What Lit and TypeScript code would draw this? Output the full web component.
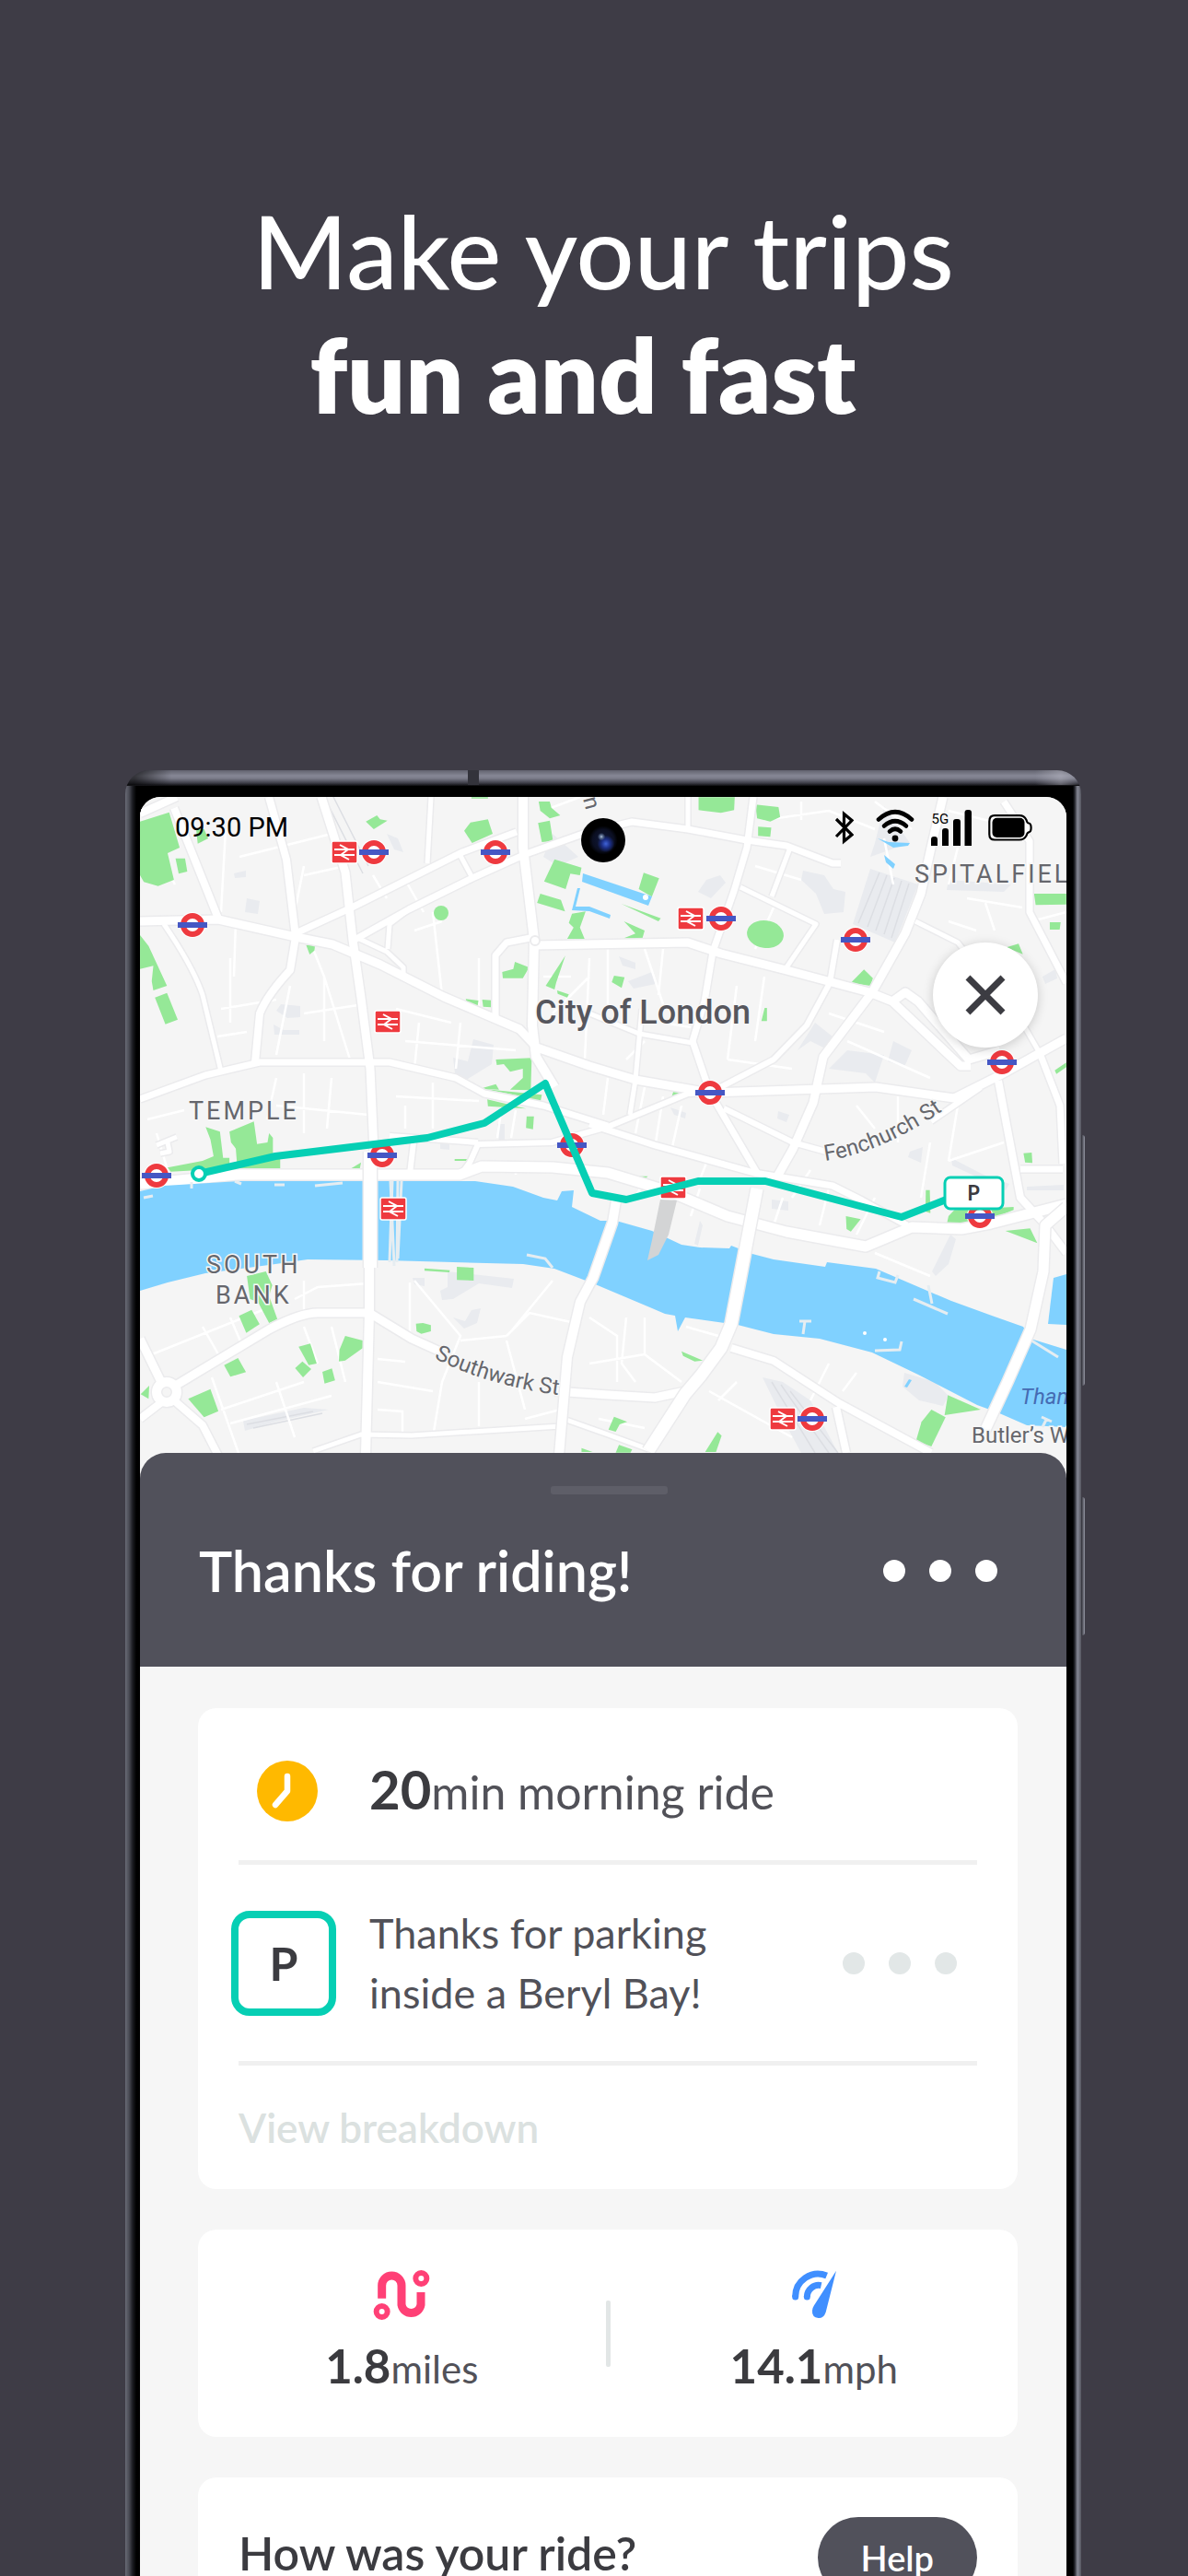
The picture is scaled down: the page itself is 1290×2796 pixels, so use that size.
import { LitElement, html, svg, css } from "lit";
import { customElement } from "lit/decorators.js";

type Road = [string, number];

/* Map geometry, in the coordinates of the map's own view box. */
const ROADS: Road[] = [
  ["M152 1000L237 998L321 1017L361 1025L413 1047L482 1082L564 1117L583 1137L640 1157L690 1172L771 1186L951 1180L1036 1192L1086 1167L1129 1143L1158 1127", 9],
  ["M292 865L311 933L321 1017L315 1053Q290 1080 282 1100L277 1153", 8],
  ["M349 865L375 947L383 1020L392 1083L402 1160L406 1250", 9],
  ["M401 1376V1425L397 1580", 10],
  ["M321 1013L382 985L502 925L561 903", 7],
  ["M385 1020L444 987L513 953L571 927L633 905L686 892L747 900L811 912L854 918L904 937L913 937", 7],
  ["M568 865V920L580 1020L578 1113L582 1147L602 1180", 10],
  ["M581 1017L550 1023L538 1037V1107", 7],
  ["M580 1026L747 1023L783 1035L854 1053L944 1077L969 1087L1043 1157L1054 1157M969 1087L983 1077L997 1087L1052 1150L1086 1140", 9],
  ["M818 865L811 920L797 967L774 1033L765 1087L752 1130L771 1186L822 1273", 7],
  ["M858 920L838 973M804 963L886 1003L854 1050", 5],
  ["M1024 865L1011 920L1000 970L983 1013L947 1077L894 1147L883 1197L861 1247L844 1277", 9],
  ["M909 1020L901 1067L876 1113L840 1150L771 1186", 6],
  ["M994 1000L1040 1023L1110 1110L1129 1143", 5],
  ["M1090 870L1118 913V990L1158 1067", 7],
  ["M1129 1143L1151 1200L1154 1263M1108 1269H1154", 7],
  ["M1084 1173L1108 1300L1133 1327L1158 1360", 8],
  ["M152 1285L258 1275H499L523 1266L600 1267L660 1273L726 1293L790 1320L854 1337L940 1353L990 1332L1044 1334L1076 1328L1158 1307", 11],
  ["M499 1277L510 1262L519 1242L599 1240L660 1223L747 1187L771 1186", 6],
  ["M423 1233L519 1240M449 1240L445 1274", 6],
  ["M640 1220L711 1243L819 1273L904 1287L936 1303L985 1330", 7],
  ["M786 1203L861 1240L897 1250M1011 1217L1065 1180", 6],
  ["M152 1193L223 1167L282 1153H423L495 1170L526 1187L590 1200L660 1222", 7],
  ["M189 877L237 997M152 883L192 865", 8],
  ["M178 1003Q210 1050 220 1080L240 1163", 5],
  ["M468 865L464 937M499 927L513 953M697 1095L690 1172L684 1210", 5],
  ["M388 1018L420 1033L438 1050V1063M444 987L423 1003L421 1030", 5],
  ["M747 865V900M640 1100L694 1122L752 1132", 5],
  ["M152 1453L175 1500M192 1503L292 1443Q326 1425 345 1425H401L447 1453L478 1467M602 1510L660 1514L711 1517L744 1510", 9],
  ["M189 1520L220 1547L237 1580M152 1540L178 1520", 8],
  ["M170 1511a11 11 0 1 0 22 0a11 11 0 1 0 -22 0", 10],
  ["M340 1575L392 1557L447 1558L609 1548M612 1540L660 1557L704 1573", 5],
  ["M794 1463L840 1477L911 1523L1011 1577M908 1527L919 1577", 8],
  ["M170 1243L192 1234M182 1240L184 1250L174 1252", 5],
];

const BRIDGES: Road[] = [
  ["M402 1250V1376", 14],
  ["M669 1303L665 1327L644 1387L630 1413L616 1473L607 1580", 10],
  ["M822 1290L794 1437L783 1463L761 1493L744 1513L704 1575", 13],
  ["M1158 1310L1135 1330L1133 1380L1119 1443L1094 1500L1068 1556", 11],
];

const LANES =
  "M160 905L190 960M245 900L240 990M260 930L360 905M250 1040V1110M256 1000L254 1060M330 940L320 990M330 950L375 940M240 1095L300 1085M236 1125L268 1120M340 1030L352 1060V1130M352 1060L380 1150M330 1100L395 1090M300 1145L315 1070M405 950L420 975M440 955L460 990M450 1010L480 1000M470 990L480 1080M520 1040V1095M430 1095L490 1110M440 1130L560 1140M455 1110L450 1160M500 1110L495 1160M160 1215L200 1205M170 1230L182 1270M300 1170L290 1215M330 1165V1230M360 1170L355 1225M300 1200L400 1210M430 1190L520 1195M440 1200V1225M470 1175V1225M545 1200L540 1235M560 1205L555 1235M560 1275V1262M590 880L630 865M590 1060H620M600 1100L640 1060M640 1040L635 1150M660 1030V1090M700 1030L720 1090M720 1030L715 1080M800 1070L790 1150M830 1060L820 1130M700 1130L680 1150M720 1110L750 1115M660 1170L655 1210M700 1180L690 1230M720 1190L712 1240M740 1200L730 1245M790 1150L860 1160M830 890L900 880M900 880L950 900M870 870V890M950 870L990 900M960 910L970 960M820 940L870 955M840 985L820 1030M1030 880L1110 900M1040 920L1030 960M1050 975L1110 985M1030 1000L1060 1010M1070 980L1080 1010M1120 1000L1158 990M900 1100L960 1120M920 1130L1010 1170M930 1200L950 1225M975 1190V1240M1010 1240L1000 1300M1040 1200L1030 1260M1030 1260L1090 1240M880 1270L860 1300M900 1290L890 1330M700 1280L690 1300M760 1290L750 1320M770 1255L760 1280M850 1300L840 1330M950 1300L930 1340M950 1360L1010 1385M165 1470L290 1420M220 1440L240 1475M250 1430L265 1465M240 1530L330 1500M250 1545L360 1515M330 1440L345 1480M360 1440L375 1500M230 1495L260 1580M300 1500L320 1560M330 1390V1430M400 1393L345 1397L320 1410M445 1392V1450M450 1390L500 1450L480 1500L470 1560M410 1475L440 1478M410 1500L470 1510M410 1530L437 1532V1556M550 1450L500 1455M550 1450L575 1425L620 1435M550 1455L570 1530M555 1445L600 1390M520 1500V1548M570 1540L608 1530M640 1430L670 1450V1500M680 1430L675 1480L690 1500M700 1430V1470L740 1500M745 1440L780 1450M770 1510L860 1560M640 1480L700 1470M800 1500L780 1520M900 1480L880 1520M930 1490L915 1510M650 1540L700 1550";

const BUILDINGS =
  "M945 943L997 960L972 1023L926 1003ZM872 945L895 950L905 965L918 968L916 990L895 992L886 970L870 955ZM767 955L782 950L788 958L772 975L758 968ZM268 975L282 978L280 992L266 990ZM254 948L267 945V952L255 953ZM305 1090L326 1092V1104L312 1105L300 1097ZM297 1112L308 1118H325V1123H298ZM492 1148L508 1152L514 1128L536 1134L534 1155L500 1176L494 1165ZM672 1038L690 1045V1052L676 1048ZM682 1065L708 1055L712 1068L688 1073ZM448 1387H461V1396L450 1394ZM478 1401L486 1397V1380L503 1382L558 1388L556 1398L520 1393L492 1410L480 1411ZM492 1430L505 1434L512 1422L522 1420L518 1436L504 1442ZM264 1542L330 1528L357 1530L300 1543L266 1553ZM828 1495L850 1500L880 1520L910 1577H870L850 1540ZM982 1490L1015 1500L1030 1515L1024 1526L998 1520L980 1505ZM1033 1257L1068 1275L1096 1285L1092 1292L1034 1265ZM1032 1340L1038 1345L1030 1372L1016 1385L1012 1380ZM838 1302L856 1304V1314L838 1312ZM760 1325L763 1330L758 1352L754 1350ZM1030 955L1098 960L1090 968L1028 966ZM1132 1060L1146 1052L1148 1062L1135 1068ZM970 1130L990 1140L982 1158L964 1152ZM900 1160L920 1140L960 1145L950 1175L940 1165ZM866 1140L885 1110L904 1125L900 1140L880 1130ZM960 875L988 915L945 930L950 915ZM1155 1286L1115 1288V1292H1155ZM420 905L432 910L438 925L428 922ZM600 905L628 930L606 940L590 930ZM728 1202L745 1208L744 1214L732 1210ZM845 1206L857 1210L854 1218L844 1214ZM988 1250L1002 1245L1000 1262L986 1256ZM540 1220H548V1240H542ZM478 1238L488 1236V1248L478 1247Z";

const WATER = [
  "M152 1293L178 1287L258 1282H516L557 1288L590 1300L605 1303L610 1293L623 1292L621 1310L652 1325L669 1325L708 1336L740 1351L760 1354L792 1355L794 1352L817 1361L840 1367L896 1375L898 1370L951 1377L1000 1398L1033 1412L1077 1428L1111 1440L1119 1453L1158 1465V1549L1115 1547L1083 1533L1061 1525L997 1492L947 1468L890 1453L840 1448L801 1438L744 1430L736 1445L733 1428L722 1426L708 1420L644 1393L602 1377L568 1372L420 1368L334 1367L292 1373L223 1382L182 1392L152 1401Z",
  "M1144 1387L1158 1383V1438L1138 1437Z",
  "M633 948L708 973L704 983L632 957Z",
  "M630 964L625 984L640 984L663 993L662 997L640 989L621 988L627 964Z",
  "M953 910L965 914L988 915L986 918L970 920ZM960 928L972 938L970 943L962 936ZM982 1505L987 1497L990 1498L985 1506Z",
];

/* Parks, grouped by map quadrant: each group has its own unit grid. */
const PARKS: { grid: string; shapes: string[] }[] = [
  {
    grid: "translate(120 820) scale(.3444 .3333)",
    shapes: [
      "93,215 185,185 218,300 180,318 200,405 150,425 105,412 93,390",
      "205,335 235,335 242,378 215,385",
      "270,240 295,240 308,270 275,287",
      "805,215 840,195 850,208 873,212 830,240",
      "1115,245 1135,218 1190,208 1205,255 1140,285",
      "1350,150 1385,150 1390,170 1418,195 1385,205 1355,180",
      "1348,220 1385,212 1395,278 1360,282",
      "1400,338 1485,365 1480,390 1450,385 1435,435 1367,410",
      "1355,450 1420,470 1433,508 1345,480",
      "1455,515 1498,508 1480,560 1495,598 1440,597 1460,560 1445,545",
      "1434,652 1405,740 1400,762 1372,750",
      "1408,765 1445,778 1440,788 1410,776",
      "1235,705 1270,695 1275,672 1320,690 1300,725 1237,725",
      "1120,793 1160,798 1157,818 1125,810",
      "1172,795 1202,797 1200,820 1175,818",
      "93,585 120,620 178,750 135,765 130,735 135,685 93,695",
      "140,788 178,773 212,860 173,875",
      "617,618 645,615 643,635 628,648",
      "1215,990 1328,985 1325,1090 1260,1088 1300,1050 1300,1020 1260,1030 1240,1005 1218,1008",
      "1165,1085 1215,1070 1225,1088",
      "1138,136 1190,136 1190,140 1138,140",
    ],
  },
  {
    grid: "translate(120 1180) scale(.3444 .3333)",
    shapes: [
      "300,130 345,145 355,230 375,230 375,265 190,275 180,262 290,240 325,225 315,170",
      "375,145 452,112 462,185 495,180 500,150 512,165 512,215 535,235 535,265 400,265 395,200 380,180",
      "750,270 790,245 785,270",
      "1188,40 1310,70 1190,62",
      "1170,5 1360,25 1355,50 1300,30",
      "1312,95 1335,95 1332,137 1310,133",
      "1085,234 1130,234 1130,240 1085,240",
      "430,615 490,600 510,645 500,680 526,755 500,768 465,700 440,690",
      "405,745 445,725 470,772 428,800",
      "358,905 402,882 427,928 378,943",
      "593,845 630,835 650,900 625,905",
      "582,915 605,893 633,918 607,945",
      "668,927 698,916 708,955 675,965",
      "740,810 795,825 795,850 740,890 720,893 722,855",
      "245,1015 315,983 340,1055 295,1075",
      "963,770 985,768 1010,775 1010,795 980,803 965,795",
      "1092,585 1145,588 1145,630 1092,628",
      "990,590 1070,596 1068,603 990,598",
      "95,1000 122,972 120,1015",
      "1485,1175 1520,1188 1485,1188",
    ],
  },
  {
    grid: "translate(640 820) scale(.3571 .3333)",
    shapes: [
      "332,136 442,136 440,178 400,187 332,178",
      "505,160 575,168 580,200 550,215 510,205",
      "513,232 553,235 550,265 513,262",
      "165,382 212,400 190,460 150,435",
      "97,483 217,530 210,540",
      "105,540 168,570 160,600 105,595 140,580",
      "795,740 835,697 862,725 855,750",
      "68,738 75,717 107,722 98,757",
      "523,865 533,822 540,822 540,865",
      "1352,450 1450,450 1450,485 1357,487",
      "1400,543 1433,543 1430,567 1400,567",
      "1268,625 1305,613 1318,647",
      "1415,1025 1450,1000 1450,1015 1420,1037",
      "255,1095 285,1098 250,1112",
    ],
  },
  {
    grid: "translate(640 1180) scale(.3571 .3333)",
    shapes: [
      "1320,215 1345,213 1347,247 1325,245",
      "1023,335 1035,335 1037,410 1022,405",
      "1087,445 1092,420 1110,400 1290,390 1290,400 1220,430 1180,450",
      "780,420 825,430 795,470 782,462",
      "1265,468 1340,460 1362,508",
      "125,290 178,290 155,310",
      "280,860 345,890 320,893 285,875",
      "1090,1003 1190,1050 1080,1068",
      "1040,1050 1083,1075 1040,1170 993,1152 1010,1090",
      "75,1073 115,1090 92,1098 80,1122 58,1115",
      "390,1123 402,1135 385,1188 352,1188",
      "90,1165 130,1180 125,1190 80,1190",
    ],
  },
];

const TUBES = [
  [406, 925], [538, 925], [209, 1004], [783, 997], [929, 1020], [1088, 1153],
  [771, 1186], [170, 1276], [415, 1254], [621, 1243], [1064, 1320], [882, 1540],
];

const RAILS = [
  [374, 925], [421, 1109], [750, 997], [427, 1312], [850, 1540], [731, 1289],
];

@customElement("city-map")
export class CityMap extends LitElement {
  static styles = css`
    :host { display: block; }
    .map { display: block; width: 100%; height: auto; font-family: Roboto, sans-serif; }
    .land { fill: #f5f5f5; }
    .building { fill: #e9ebef; }
    .lane { fill: none; stroke: #fff; stroke-width: 2.5; }
    .casing { fill: none; stroke: #ebebed; stroke-linejoin: round; }
    .road { fill: none; stroke: #fff; stroke-linejoin: round; }
    .water { fill: #80d1ff; }
    .park { fill: #95e897; }
    .pier { fill: none; stroke: #e6edf1; stroke-width: 3; }
    .platform { fill: #d3d4d5; }
    .track { fill: none; stroke: #dcdee3; stroke-width: 1.5; }
    .label { fill: #66676d; stroke: #f7f7f7; stroke-width: 3; paint-order: stroke; }
    .area { font-size: 27px; letter-spacing: 3px; }
    .city { font-size: 36px; font-weight: 500; fill: #56565d; }
    .street { font-size: 24px; }
    .river { font-size: 24px; font-style: italic; fill: #456bb3; }
    .ring { fill: #fff; stroke: #ee3a3f; stroke-width: 6; }
    .halo { fill: #fff; }
    .bar { fill: #4557c4; }
    .rail { fill: #ee3a3f; stroke: #fff; stroke-width: 1.5; }
    .arrow { fill: none; stroke: #fff; stroke-width: 2; }
    .route { fill: none; stroke: #06cfb4; stroke-width: 8; stroke-linejoin: round; }
    .start { fill: #fff; stroke: #06cfb4; stroke-width: 4; }
    .bay { fill: #fff; stroke: #06cfb4; stroke-width: 3; }
    .bay-text { font-family: Lato, sans-serif; font-weight: 700; font-size: 22px; fill: #3b3b40; text-anchor: middle; }
  `;

  render() {
    return html`
      <svg class="map" viewBox="152 865 1006 740" role="img" aria-label="Map of the ride through the City of London">
        <rect class="land" x="152" y="865" width="1006" height="740" />
        <path class="building" d=${BUILDINGS} />
        <path class="track" d="M955 947L932 1002M963 950L942 1006M971 953L951 1010M979 956L960 1014M987 959L968 1018M838 1500L885 1577M848 1503L900 1577M858 1510L910 1577M268 1546L340 1532M275 1550L350 1534M352 865L394 948M362 865L400 940" />
        <path class="lane" d=${LANES} />
        ${PARKS.map(
          (p) => svg`<g class="park" transform=${p.grid}>${p.shapes.map((s) => svg`<polygon points=${s} />`)}</g>`,
        )}
        <circle class="park" cx="479" cy="991" r="8" />
        <ellipse class="park" cx="831" cy="1014" rx="20" ry="15" transform="rotate(8 831 1014)" />
        ${ROADS.map(([d, w]) => svg`<path class="casing" d=${d} stroke-width=${w + 3} />`)}
        ${ROADS.map(([d, w]) => svg`<path class="road" d=${d} stroke-width=${w} />`)}
        <circle cx="581" cy="1021" r="5" class="casing" stroke-width="2" />
        ${WATER.map((d) => svg`<path class="water" d=${d} />`)}
        <path class="pier" d="M208 1283V1290M255 1282L262 1285M298 1286H309M342 1287L372 1284M424 1282L428 1374M432 1282L431 1370M436 1282L432 1366M426 1282L423 1370M572 1362L592 1366L600 1376M955 1380L953 1387L972 1392L975 1384M1008 1395L1012 1415M992 1410L1029 1426M868 1434H881M874 1434L872 1448M950 1466L977 1465L979 1456M1120 1455L1149 1473M1131 1538L1142 1543M1136 1541L1132 1549M156 1300L166 1298" />
        <circle class="halo" cx="939" cy="1447" r="2" />
        <circle class="halo" cx="961" cy="1454" r="2" />
        <circle class="halo" cx="701" cy="974" r="3" />
        <path class="platform" d="M717 1302L735 1303L726 1340L715 1362L703 1368L708 1346Z" />
        ${BRIDGES.map(([d, w]) => svg`<path class="casing" d=${d} stroke-width=${w + 3} />`)}
        ${BRIDGES.map(([d, w]) => svg`<path class="road" d=${d} stroke-width=${w} />`)}

        ${TUBES.map(
          ([x, y]) => svg`<g transform=${`translate(${x} ${y})`}>
            <circle class="halo" r="14" />
            <circle class="ring" r="10" />
            <rect class="bar" x="-16" y="-3" width="32" height="6" />
          </g>`,
        )}
        ${RAILS.map(
          ([x, y]) => svg`<g transform=${`translate(${x} ${y})`}>
            <rect class="rail" x="-14" y="-12" width="28" height="24" rx="2" />
            <path class="arrow" d="M-11 -3H11M-11 3H11M-5 -8L4 -3L-4 3L5 8" />
          </g>`,
        )}

        <text class="label area" x="205" y="1215">TEMPLE</text>
        <text class="label area" x="224" y="1382">SOUTH</text>
        <text class="label area" x="234" y="1415">BANK</text>
        <text class="label area" x="993" y="958">SPITALFIEL</text>
        <text class="label city" x="581" y="1111">City of London</text>
        <path id="fenchurch" fill="none" d="M896 1260Q956 1252 1026 1204" />
        <text class="label street"><textPath href="#fenchurch">Fenchurch St</textPath></text>
        <path id="southwark" fill="none" d="M471 1474Q530 1504 606 1514" />
        <text class="label street"><textPath href="#southwark">Southwark St</textPath></text>
        <text class="river" x="1108" y="1524">Tham</text>
        <text class="label street" x="1055" y="1566">Butler’s W</text>
        <text class="label street" transform="translate(633 867) rotate(75)">n</text>

        <polyline class="route" points="216,1274 299,1255 464,1235 526,1219 592,1176 643,1295 680,1302 758,1282 831,1282 979,1321 1030,1301" />
        <circle class="start" cx="216" cy="1274" r="7" />
        <rect class="bay" x="1026" y="1278" width="63" height="34" rx="6" />
        <text class="bay-text" x="1057" y="1303">P</text>
      </svg>
    `;
  }
}

@customElement("app-root")
export class AppRoot extends LitElement {
  static styles = css`
    :host {
      display: block;
      font-family: Lato, "Liberation Sans", sans-serif;
      color: #3b3b40;
    }
    * { box-sizing: border-box; }
    .poster {
      height: 100vh;
      overflow: hidden;
      background: #3e3c46;
      padding: 204px 116px 0 136px;
    }
    .headline {
      margin: 0 0 362px;
      font-size: 111px;
      line-height: 135px;
      font-weight: 500;
      color: #fff;
      text-align: center;
    }
    .headline strong { display: block; font-weight: 800; padding-right: 44px; }

    .phone {
      position: relative;
      padding: 29px 16px 0;
      border-radius: 26px 26px 0 0;
      background:
        linear-gradient(to right, transparent 372px, #33333b 372px, #33333b 384px, transparent 384px) 0 0 / 100% 16px no-repeat,
        linear-gradient(to right, #0009 10px, transparent 50px, transparent calc(100% - 50px), #d5d5e055 calc(100% - 22px), transparent) 0 0 / 100% 16px no-repeat,
        linear-gradient(#62636f, #868795 6px, #7a7b89 9px, #3c3c46 14px, #0b0b0d 17px) 0 0 / 100% 17px no-repeat,
        linear-gradient(to right, #696b76 0, #4b4c56 4px, #1b1c21 8px, #000 12px, #000 calc(100% - 9px), #24252b calc(100% - 7px), #868895 calc(100% - 4px), #55565f 100%);
    }
    .side-key {
      position: absolute;
      right: -4px;
      width: 4px;
      border-radius: 0 3px 3px 0;
      background: linear-gradient(to right, #2b2b33, #9496a3);
    }
    .volume { top: 396px; height: 272px; }
    .power { top: 789px; height: 150px; }

    .screen {
      position: relative;
      overflow: hidden;
      border-radius: 22px 22px 0 0;
      background: #f6f6f6;
    }
    .status {
      position: absolute;
      inset: 0 0 auto;
      height: 66px;
      padding: 0 37px 0 38px;
      display: flex;
      align-items: center;
      justify-content: space-between;
      color: #000;
      font-family: Roboto, sans-serif;
      font-size: 29px;
    }
    .indicators { display: flex; gap: 18px; align-items: center; }
    .indicators svg { display: block; height: 44px; }
    .bluetooth { margin-right: 6px; }
    .camera {
      position: absolute;
      top: 23px;
      left: 50%;
      width: 48px;
      height: 48px;
      margin-left: -24px;
      border-radius: 50%;
      background:
        radial-gradient(circle at 46% 42%, #b9c6dd 0, #5f7394 4%, transparent 11%),
        radial-gradient(circle at 56% 58%, #3f63d8 0, #1c2f86 12%, transparent 24%),
        radial-gradient(circle, #10193c 0, #0b0f22 34%, #000 46%);
    }
    .close {
      position: absolute;
      top: 158px;
      right: 31px;
      width: 114px;
      height: 114px;
      padding: 0;
      border: 0;
      border-radius: 50%;
      background: #fff;
      box-shadow: 0 2px 12px #0000002e;
      display: grid;
      place-items: center;
    }

    .sheet { position: relative; margin-top: -28px; }
    .sheet-head {
      padding: 36px 75px 70px 64px;
      border-radius: 28px 28px 0 0;
      background: #51515b;
      color: #fff;
    }
    .handle-row { display: flex; justify-content: center; padding-left: 24px; margin-bottom: 49px; }
    .handle {
      width: 127px;
      height: 9px;
      border-radius: 3px;
      background: #5e5e68;
    }
    .title-row { display: flex; align-items: center; justify-content: space-between; }
    .title { margin: 0; font-size: 61px; line-height: 68px; font-weight: 600; }
    .dots {
      display: flex;
      gap: 26px;
      padding: 0;
      border: 0;
      background: none;
      color: #fff;
    }
    .dots i { width: 24px; height: 24px; border-radius: 50%; background: currentColor; }
    .dots.faint { color: #e2e7e7; margin-right: 22px; }

    .cards { display: grid; gap: 44px; padding: 45px 53px 0 63px; }
    .card { background: #fff; border-radius: 20px; padding: 0 44px; }
    .row { display: flex; align-items: center; gap: 36px; margin-left: -8px; }
    .row .slot { width: 114px; flex: none; }
    .duration { height: 165px; padding-top: 14px; }
    .clock { display: block; margin-left: 28px; }
    .line { margin: 0; height: 5px; border: 0; background: #f0f0f0; }
    .measure { margin: 0; display: flex; align-items: baseline; line-height: 60px; }
    .value { font-size: 51px; font-weight: 700; color: #3b3b3f; }
    .unit { font-size: 42px; color: #515158; }
    .duration .value { font-size: 58px; }
    .duration .unit { font-size: 50px; }
    .parking { height: 213px; }
    .bay {
      height: 114px;
      display: grid;
      place-items: center;
      border: 8px solid #06cfb4;
      border-radius: 20px;
      font-size: 50px;
      font-weight: 700;
    }
    .parking p { margin: 0; flex: 1; font-size: 45px; line-height: 65px; color: #515158; }
    .breakdown {
      display: block;
      font-size: 44px;
      line-height: 134px;
      font-weight: 600;
      color: #dbe1e0;
      text-decoration: none;
    }
    .stats { display: flex; align-items: center; padding: 0; }
    .stat { flex: 1; height: 225px; padding-top: 43px; display: flex; flex-direction: column; align-items: center; gap: 20px; }
    .stat svg { display: block; }
    .split { width: 5px; height: 72px; border-radius: 2px; background: #e2e6e6; }
    .feedback { display: flex; justify-content: space-between; padding-top: 43px; padding-bottom: 44px; }
    .feedback h2 { margin: 0; font-size: 50px; line-height: 78px; font-weight: 600; }
    .help {
      height: 88px;
      padding: 0 47px;
      border: 0;
      border-radius: 44px;
      background: #51515b;
      color: #fff;
      font: 600 38px/88px Lato, sans-serif;
    }
  `;

  render() {
    return html`
      <main class="poster">
        <h1 class="headline">Make your trips<strong>fun and fast</strong></h1>
        <section class="phone">
          <span class="side-key volume"></span>
          <span class="side-key power"></span>
          <div class="screen">
            <city-map></city-map>
            ${this.statusBar()}
            <span class="camera"></span>
            <button class="close" aria-label="Close">
              <svg width="46" height="46" viewBox="0 0 46 46">
                <path d="M4 4L42 42M42 4L4 42" stroke="#3c3c42" stroke-width="7" fill="none" />
              </svg>
            </button>
            <div class="sheet">
              <header class="sheet-head">
                <div class="handle-row"><div class="handle"></div></div>
                <div class="title-row">
                  <h2 class="title">Thanks for riding!</h2>
                  <button class="dots" aria-label="More options"><i></i><i></i><i></i></button>
                </div>
              </header>
              <div class="cards">${this.rideCard()} ${this.statsCard()} ${this.feedbackCard()}</div>
            </div>
          </div>
        </section>
      </main>
    `;
  }

  private statusBar() {
    return html`
      <div class="status">
        <time datetime="21:30">09:30 PM</time>
        <div class="indicators">
          <svg class="bluetooth" width="21" height="44" viewBox="907 876 21 44">
            <path d="M909 889L926 906L917.500 913V883.500L926 890.500L909 908" fill="none" stroke="#000" stroke-width="3.200" stroke-linejoin="miter" />
          </svg>
          <svg width="42" height="44" viewBox="952 876 42 44">
            <g fill="none" stroke="#000" stroke-width="4.600" stroke-linecap="round">
              <path d="M955 889.500Q973 873 991 889.500" />
              <path d="M961 896.500Q973 886 985 896.500" />
              <path d="M967 902.500Q973 897 979 902.500" />
            </g>
            <circle cx="973" cy="910" r="3.400" />
          </svg>
          <svg width="44" height="44" viewBox="1011 876 44 44">
            <text x="1011.500" y="894" font-family="Roboto" font-size="15">5G</text>
            <path d="M1011 918V911q0-3 3-3h1q3 0 3 3V918ZM1023 918V902q0-3 3-3h1q3 0 3 3V918ZM1035 918V892q0-3 3-3h2q3 0 3 3V918ZM1047.500 918V882q0-3 3-3h1.500q3 0 3 3V918Z" />
          </svg>
          <svg width="48" height="44" viewBox="1073 876 48 44">
            <path d="M1080 885.200H1107Q1112 885.200 1114.500 890Q1115.500 893.500 1117 893.500Q1119.600 893.800 1119.600 898.500Q1119.600 903 1117 903.300Q1115.500 903.500 1114.500 907Q1112 911.500 1107 911.500H1080Q1074.300 911.500 1074.300 905.500V891.500Q1074.300 885.200 1080 885.200Z" fill="#fff" stroke="#000" stroke-width="2.200" />
            <rect x="1077.500" y="887.800" width="35" height="21.200" rx="5" />
          </svg>
        </div>
      </div>
    `;
  }

  private rideCard() {
    return html`
      <article class="card">
        <div class="row duration">
          <div class="slot">
            <svg class="clock" width="66" height="66" viewBox="0 0 66 66">
              <circle cx="33" cy="33" r="33" fill="#ffb900" />
              <path d="M33 17V33L20 48" fill="none" stroke="#fff" stroke-width="6.500" stroke-linecap="round" stroke-linejoin="round" />
            </svg>
          </div>
          <p class="measure"><span class="value">20</span><span class="unit">min morning ride</span></p>
        </div>
        <hr class="line" />
        <div class="row parking">
          <div class="slot bay">P</div>
          <p>Thanks for parking<br />inside a Beryl Bay!</p>
          <button class="dots faint" aria-label="Parking options"><i></i><i></i><i></i></button>
        </div>
        <hr class="line" />
        <a class="breakdown" href="#breakdown">View breakdown</a>
      </article>
    `;
  }

  private statsCard() {
    return html`
      <article class="card stats">
        <div class="stat">
          <svg width="62" height="55" viewBox="75 67 186 165">
            <g fill="none" stroke="#ff4076">
              <circle cx="104" cy="205" r="18" stroke-width="18" />
              <circle cx="232" cy="97" r="18" stroke-width="18" />
              <path d="M104 162V120a32 32 0 0 1 64 0V183a32 32 0 0 0 63 0V142" stroke-width="27" />
            </g>
          </svg>
          <p class="measure"><span class="value">1.8</span><span class="unit">miles</span></p>
        </div>
        <span class="split"></span>
        <div class="stat">
          <svg width="50" height="55" viewBox="88 66 150 165">
            <g fill="none" stroke="#408fff" stroke-width="21">
              <path d="M102 156A74 74 0 0 1 204 87" />
              <path d="M140 156A38 38 0 0 1 186 119" />
            </g>
            <g fill="#408fff">
              <circle cx="102" cy="156" r="10.500" />
              <circle cx="140" cy="156" r="10.500" />
            </g>
            <path d="M235 71L201 206Q194 226 177 225Q155 222 157 201Q158 191 163 184Z" fill="#408fff" stroke="#fff" stroke-width="12" paint-order="stroke" />
          </svg>
          <p class="measure"><span class="value">14.1</span><span class="unit">mph</span></p>
        </div>
      </article>
    `;
  }

  private feedbackCard() {
    return html`
      <article class="card feedback">
        <h2>How was your ride?</h2>
        <button class="help">Help</button>
      </article>
    `;
  }
}
